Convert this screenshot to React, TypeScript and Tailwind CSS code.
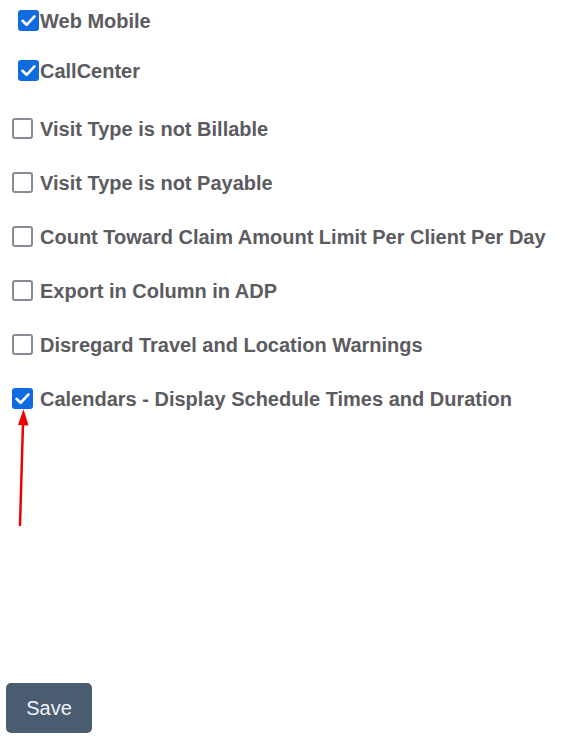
import { useState } from 'react';

const mobileOptions = [
  { id: 'web-mobile', label: 'Web Mobile', checked: true },
  { id: 'call-center', label: 'CallCenter', checked: true },
];

const visitOptions = [
  { id: 'not-billable', label: 'Visit Type is not Billable', checked: false },
  { id: 'not-payable', label: 'Visit Type is not Payable', checked: false },
  { id: 'claim-limit', label: 'Count Toward Claim Amount Limit Per Client Per Day', checked: false },
  { id: 'adp', label: 'Export in Column in ADP', checked: false },
  { id: 'travel', label: 'Disregard Travel and Location Warnings', checked: false },
  { id: 'calendars', label: 'Calendars - Display Schedule Times and Duration', checked: true },
];

function Box({ checked, onChange }: { checked: boolean; onChange: () => void }) {
  return (
    <span className="relative w-[21px] h-[21px] shrink-0">
      <input
        type="checkbox"
        checked={checked}
        onChange={onChange}
        className="appearance-none m-0 block w-[21px] h-[21px] rounded-[3px] border-2 border-[#8a8a97] bg-white checked:border-0 checked:bg-[#0f6be0]"
      />
      {checked && (
        <svg className="absolute inset-0 pointer-events-none" width="21" height="21" viewBox="0 0 21 21">
          <path d="M4.5 10.8 L8.6 14.8 L16.5 6.4" fill="none" stroke="#fff" strokeWidth="2.6" strokeLinecap="round" strokeLinejoin="round" />
        </svg>
      )}
    </span>
  );
}

export default function App() {
  const [values, setValues] = useState<Record<string, boolean>>(() =>
    Object.fromEntries([...mobileOptions, ...visitOptions].map(o => [o.id, o.checked]))
  );
  const toggle = (id: string) => setValues(v => ({ ...v, [id]: !v[id] }));

  return (
    <div className="relative w-[573px] h-[742px] bg-white font-['Liberation_Sans',Arial,sans-serif] text-[#5b5b60]">
      <div className="flex flex-col gap-[29px] pt-[10px] pl-[18px]">
        {mobileOptions.map(o => (
          <label key={o.id} className="flex items-center gap-px h-[21px] text-[20px] font-bold">
            <Box checked={values[o.id]} onChange={() => toggle(o.id)} />
            {o.label}
          </label>
        ))}
      </div>
      <div className="flex flex-col gap-[33px] pt-[37px] pl-[12px]">
        {visitOptions.map(o => (
          <label key={o.id} className="flex items-center gap-[7px] h-[21px] text-[20px] font-bold">
            <Box checked={values[o.id]} onChange={() => toggle(o.id)} />
            {o.label}
          </label>
        ))}
      </div>

      {/* annotation arrow */}
      <svg className="absolute left-0 top-[405px]" width="40" height="125" viewBox="0 0 40 125">
        <line x1="20" y1="120" x2="23" y2="18" stroke="#ee0000" strokeWidth="2.5" strokeLinecap="round" />
        <polygon points="23.5,4 18,20 28.5,20.5" fill="#ee0000" />
      </svg>

      <button className="absolute left-[6px] top-[683px] w-[86px] h-[50px] rounded-[5px] bg-[#4a5d70] text-[#eef2f7] text-[20px] font-['Liberation_Sans',Arial,sans-serif]">
        Save
      </button>
    </div>
  );
}
